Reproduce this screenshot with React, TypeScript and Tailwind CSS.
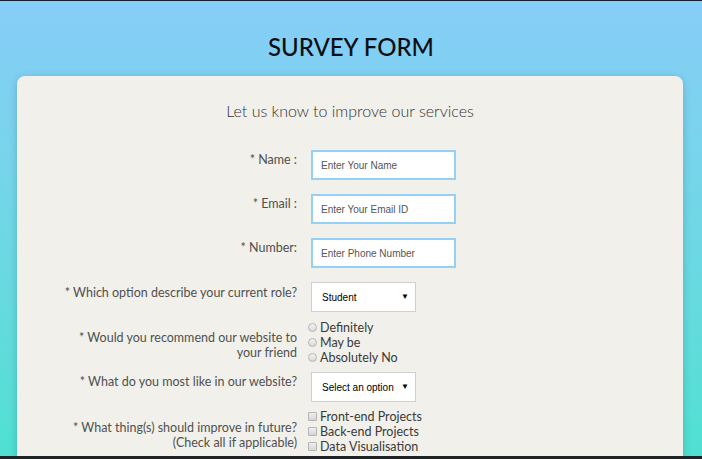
export default function App() {
  const base = "text-[12.5px] text-[#505050] text-right w-[260px] shrink-0 whitespace-nowrap";
  const label = `${base} leading-[20px]`;
  const label2 = `${base} leading-[15px]`;
  const input =
    "w-[145px] h-[30px] px-[8px] bg-white border-2 border-[#93d2f6] text-[10px] placeholder:text-[#555] outline-none";
  const uiFont = { fontFamily: '"Liberation Sans", Arial, sans-serif' };

  return (
    <div className="h-[459px] flex flex-col overflow-hidden" style={{ fontFamily: "Lato, 'Open Sans', sans-serif" }}>
      <div className="h-[1px] bg-[#102030]" />
      <div className="flex-1 overflow-hidden bg-gradient-to-b from-[#87cdf8] to-[#4ee0d2]">
        <h1 className="pt-[30px] text-center text-[24px] leading-[32px] font-medium text-[#0b0f14]">SURVEY FORM</h1>

        <div className="mt-[13px] ml-[17px] w-[666px] h-[500px] rounded-[8px] bg-[#f1f0ea] shadow-[0_2px_8px_rgba(0,0,0,0.18)] pt-[23px]">
          <p className="text-center text-[16px] leading-[24px] font-light text-[#333]">Let us know to improve our services</p>

          <div className="ml-[20px] mt-[27px] flex flex-col">
            {/* text inputs */}
            {[
              { l: "* Name :", p: "Enter Your Name" },
              { l: "* Email :", p: "Enter Your Email ID" },
              { l: "* Number:", p: "Enter Phone Number" },
            ].map((r) => (
              <div key={r.l} className="flex items-start gap-[14px] mb-[14px]">
                <label className={label}>{r.l}</label>
                <input className={input} style={uiFont} placeholder={r.p} />
              </div>
            ))}

            <div className="flex items-start gap-[14px]">
              <label className={`${label} pt-[1px]`}>* Which option describe your current role?</label>
              <Select text="Student" />
            </div>

            <div className="flex items-start gap-[11px] mt-[8px]">
              <label className={`${label2} pt-[10px]`}>
                * Would you recommend our website to
                <br />
                your friend
              </label>
              <div className="flex flex-col text-[12.5px] leading-[15px] text-[#3a3a3a]">
                {["Definitely", "May be", "Absolutely No"].map((o) => (
                  <div key={o} className="flex items-center gap-[3px]">
                    <span className="w-[9px] h-[9px] rounded-full border border-[#b5b5b5] bg-gradient-to-b from-[#f4f4f4] to-[#d9d9d9]" />
                    {o}
                  </div>
                ))}
              </div>
            </div>

            <div className="flex items-start gap-[14px] mt-[7px]">
              <label className={label}>* What do you most like in our website?</label>
              <Select text="Select an option" />
            </div>

            <div className="flex items-start gap-[11px] mt-[7px]">
              <label className={`${label2} pt-[11px]`}>
                * What thing(s) should improve in future?
                <br />
                (Check all if applicable)
              </label>
              <div className="flex flex-col text-[12.5px] leading-[15px] text-[#3a3a3a]">
                {["Front-end Projects", "Back-end Projects", "Data Visualisation", "Challenges"].map((o) => (
                  <div key={o} className="flex items-center gap-[3px]">
                    <span className="w-[9px] h-[9px] rounded-[1px] border border-[#b5b5b5] bg-gradient-to-b from-[#f0f0f0] to-[#d5d5d5]" />
                    {o}
                  </div>
                ))}
              </div>
            </div>
          </div>
        </div>
      </div>
      <div className="h-[3px] bg-[#1f2326]" />
    </div>
  );
}

function Select({ text }: { text: string }) {
  return (
    <div
      className="w-[105px] h-[30px] bg-white border border-[#cfcfcf] flex items-center justify-between pl-[10px] pr-[6px] text-[10px] text-black"
      style={{ fontFamily: '"Liberation Sans", Arial, sans-serif' }}
    >
      <span>{text}</span>
      <span className="text-[8px]">▼</span>
    </div>
  );
}
